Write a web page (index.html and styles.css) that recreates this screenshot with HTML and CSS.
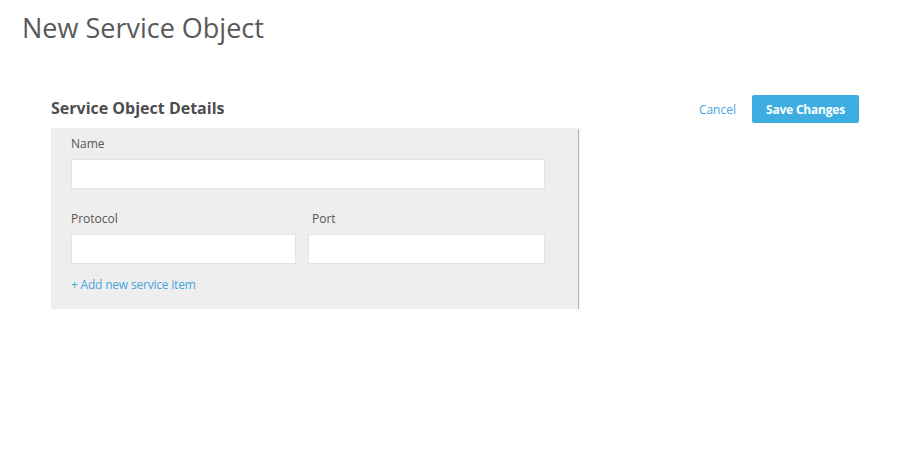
FILE: index.html
```html
<!DOCTYPE html>
<html>
<head>
<meta charset="utf-8">
<link rel="stylesheet" href="styles.css">
</head>
<body>
<h1 class="page-title">New Service Object</h1>
<div class="content">
  <div class="form-col">
    <h2 class="section-title">Service Object Details</h2>
    <div class="card">
      <div class="field">
        <label class="label">Name</label>
        <input class="input" type="text">
      </div>
      <div class="row">
        <div class="field protocol">
          <label class="label">Protocol</label>
          <input class="input" type="text">
        </div>
        <div class="field port-field">
          <label class="label port">Port</label>
          <input class="input" type="text">
        </div>
      </div>
      <a class="add-link">+ Add new service item</a>
    </div>
  </div>
  <div class="actions">
    <a class="cancel">Cancel</a>
    <button class="save">Save Changes</button>
  </div>
</div>
</body>
</html>
```
FILE: styles.css
```css
* { box-sizing: border-box; }
body {
  margin: 0;
  font-family: "Source Sans Pro", "Open Sans", Lato, sans-serif;
  color: #555;
  background: #fff;
}
.page-title {
  margin: 0;
  padding: 10px 0 0 22px;
  font-size: 27px;
  font-weight: 400;
  color: #58595b;
  line-height: 36px;
}
.content {
  display: flex;
  justify-content: space-between;
  padding: 50px 45px 0 51px;
}
.form-col { width: 527px; }
.section-title {
  margin: 0 0 8px 0;
  font-size: 16px;
  font-weight: 700;
  color: #4d4d4f;
  line-height: 24px;
}
.card {
  background: #eeeeee;
  box-shadow: 1px 1px 1px rgba(0,0,0,0.3);
  padding: 8px 33px 16px 20px;
}
.field { display: flex; flex-direction: column; }
.label {
  font-size: 12px;
  color: #555;
  line-height: 16px;
  margin-bottom: 7px;
}
.port { margin-left: 4px; }
.input {
  height: 30px;
  border: 1px solid #e3e3e3;
  background: #fff;
  outline: none;
  margin: 0;
}
.row {
  display: flex;
  gap: 12px;
  margin-top: 22px;
}
.protocol { width: 225px; }
.port-field { flex: 1; }
.add-link {
  display: block;
  margin-top: 13px;
  font-size: 12px;
  letter-spacing: -0.2px;
  color: #45a6dc;
  line-height: 16px;
}
.actions {
  display: flex;
  align-items: center;
  gap: 16px;
  height: 28px;
  margin-top: -1px;
}
.cancel {
  font-size: 12px;
  color: #45a6dc;
}
.save {
  height: 28px;
  width: 107px;
  border: none;
  border-radius: 2px;
  background: #3eaee2;
  color: #fff;
  font-family: inherit;
  font-weight: 700;
  font-size: 12px;
  letter-spacing: -0.2px;
}
```
